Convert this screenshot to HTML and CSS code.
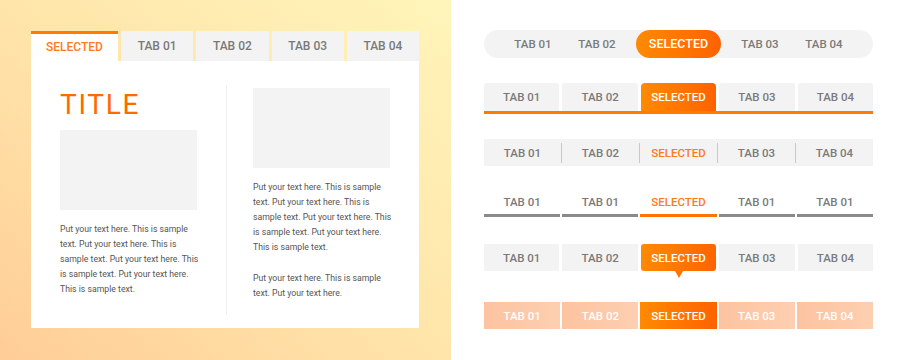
FILE: index.html
```html
<!DOCTYPE html>
<html>
<head>
<meta charset="utf-8">
<link rel="stylesheet" href="styles.css">
</head>
<body>
<div class="page">
  <section class="left">
    <div class="card">
      <div class="card-tabs">
        <div class="ctab ctab-sel">SELECTED</div>
        <div class="ctab">TAB 01</div>
        <div class="ctab">TAB 02</div>
        <div class="ctab">TAB 03</div>
        <div class="ctab">TAB 04</div>
      </div>
      <div class="card-body">
        <div class="col col-a">
          <h1 class="title">TITLE</h1>
          <div class="ph"></div>
          <p class="txt">Put your text here. This is sample<br>text. Put your text here. This is<br>sample text. Put your text here. This<br>is sample text. Put your text here.<br>This is sample text.</p>
        </div>
        <div class="col col-b">
          <div class="ph"></div>
          <p class="txt">Put your text here. This is sample<br>text. Put your text here. This is<br>sample text. Put your text here. This<br>is sample text. Put your text here.<br>This is sample text.</p>
          <p class="txt txt-2">Put your text here. This is sample<br>text. Put your text here.</p>
        </div>
      </div>
    </div>
  </section>
  <section class="right">
    <div class="row pill">
      <div class="pt">TAB 01</div>
      <div class="pt">TAB 02</div>
      <div class="pt pt-sel">SELECTED</div>
      <div class="pt">TAB 03</div>
      <div class="pt">TAB 04</div>
    </div>
    <div class="row r2">
      <div class="t">TAB 01</div>
      <div class="t">TAB 02</div>
      <div class="t t-sel">SELECTED</div>
      <div class="t">TAB 03</div>
      <div class="t">TAB 04</div>
    </div>
    <div class="row r3">
      <div class="t">TAB 01</div>
      <div class="t">TAB 02</div>
      <div class="t t-sel">SELECTED</div>
      <div class="t">TAB 03</div>
      <div class="t">TAB 04</div>
    </div>
    <div class="row r4">
      <div class="t">TAB 01</div>
      <div class="t">TAB 01</div>
      <div class="t t-sel">SELECTED</div>
      <div class="t">TAB 01</div>
      <div class="t">TAB 01</div>
    </div>
    <div class="row r5">
      <div class="t">TAB 01</div>
      <div class="t">TAB 02</div>
      <div class="t t-sel">SELECTED</div>
      <div class="t">TAB 03</div>
      <div class="t">TAB 04</div>
    </div>
    <div class="row r6">
      <div class="t">TAB 01</div>
      <div class="t">TAB 02</div>
      <div class="t t-sel">SELECTED</div>
      <div class="t">TAB 03</div>
      <div class="t">TAB 04</div>
    </div>
  </section>
</div>
</body>
</html>
```
FILE: styles.css
```css
* { box-sizing: border-box; }
html, body { margin: 0; padding: 0; }
body {
  font-family: Roboto, "Liberation Sans", sans-serif;
  background: #fff;
}
.page {
  display: flex;
  width: 902px;
  height: 360px;
}
.left {
  width: 451px;
  height: 360px;
  padding: 31px 0 0 31px;
  background: linear-gradient(to top right, #ffcd97 0%, #ffe3a8 45%, #fff5ba 100%);
}
.card { width: 388px; }
.card-tabs {
  display: flex;
  gap: 3px;
  height: 30px;
}
.ctab {
  flex: 1;
  background: #f3f3f3;
  color: #7a7a7a;
  font-size: 12px;
  font-weight: 500;
  display: flex;
  align-items: center;
  justify-content: center;
}
.ctab-sel {
  flex: 0 0 87px;
  background: #fff;
  color: #ff7a1c;
  border-top: 3px solid #ff7a00;
  padding-bottom: 2px;
}
.card-body {
  background: #fff;
  height: 267px;
  display: flex;
  padding: 24px 0 13px;
}
.col-a {
  width: 195px;
  padding: 6px 0 0 29px;
}
.col-b {
  flex: 1;
  border-left: 1px solid #f0f0f0;
  padding: 3px 0 0 26px;
}
.title {
  margin: 0;
  font-size: 28px;
  line-height: 28px;
  font-weight: 400;
  letter-spacing: 1.7px;
  color: #ff6a00;
}
.ph {
  width: 137px;
  height: 80px;
  background: #f3f3f3;
}
.col-a .ph { margin-top: 11px; }
.txt {
  margin: 12px 0 0;
  font-size: 8.7px;
  line-height: 15px;
  color: #555;
  white-space: nowrap;
}
.txt-2 { margin-top: 16px; }

.right {
  flex: 1;
  padding: 30px 0 0 33px;
  display: flex;
  flex-direction: column;
}
.row {
  width: 389px;
  display: flex;
  font-size: 11.5px;
  font-weight: 500;
}
.pill {
  height: 28px;
  border-radius: 14px;
  background: #f3f3f3;
  padding: 0 17px;
}
.pt {
  width: 64px;
  line-height: 28px;
  text-align: center;
  color: #7a7a7a;
}
.pt-sel {
  width: 85px;
  margin: 0 7px;
  border-radius: 14px;
  color: #fff;
  font-size: 12.5px;
  background: linear-gradient(to right, #ff8a00, #ff6200);
}
.t {
  flex: 1;
  display: flex;
  align-items: center;
  justify-content: center;
  color: #7a7a7a;
}
.r2 {
  margin-top: 25px;
  gap: 3px;
  height: 31px;
  border-bottom: 3px solid #ff7a00;
}
.r2 .t {
  background: #f3f3f3;
  border-radius: 3px 3px 0 0;
}
.r2 .t-sel {
  color: #fff;
  border-radius: 4px 4px 0 0;
  background: linear-gradient(to right, #ff8a00, #ff6200);
}
.r3 {
  margin-top: 25px;
  height: 27px;
  background: #f3f3f3;
  padding: 4px 0 3px;
}
.r3 .t + .t { border-left: 1px solid #c8c8c8; }
.r3 .t-sel { color: #ff7a1c; }
.r4 {
  margin-top: 23px;
  gap: 2px;
  height: 28px;
}
.r4 .t { border-bottom: 3px solid #8a8a8a; }
.r4 .t-sel { color: #ff7a1c; border-bottom-color: #ff7400; }
.r5 {
  margin-top: 27px;
  gap: 3px;
  height: 27px;
}
.r5 .t {
  background: #f3f3f3;
  position: relative;
}
.r5 .t-sel {
  color: #fff;
  border-radius: 3px;
  background: linear-gradient(to right, #ff8a00, #ff6400);
}
.r5 .t-sel::after {
  content: "";
  position: absolute;
  left: 50%;
  top: 100%;
  margin-left: -4px;
  border-left: 4px solid transparent;
  border-right: 4px solid transparent;
  border-top: 7px solid #ff7400;
}
.r6 {
  margin-top: 31px;
  gap: 2px;
  height: 27px;
}
.r6 .t {
  color: #fff;
  background: linear-gradient(to right, #fdc3a0, #fdcfb1);
}
.r6 .t-sel {
  background: linear-gradient(to right, #ff8a00, #ff6200);
}
```
